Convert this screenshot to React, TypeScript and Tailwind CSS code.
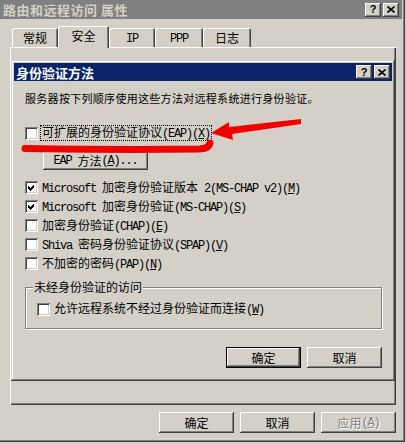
import React from 'react';

// classic Windows bevels
const WIN = "shadow-[inset_-1px_-1px_0_#404040,inset_1px_1px_0_#d4d0c8,inset_-2px_-2px_0_#808080,inset_2px_2px_0_#ffffff]";
const BTN = "shadow-[inset_-1px_-1px_0_#404040,inset_1px_1px_0_#ffffff,inset_-2px_-2px_0_#808080,inset_2px_2px_0_#d4d0c8]";
const BTN_DEF = "shadow-[inset_0_0_0_1px_#000000,inset_-2px_-2px_0_#404040,inset_2px_2px_0_#ffffff,inset_-3px_-3px_0_#808080]";
const BOX = "shadow-[inset_1px_1px_0_#808080,inset_-1px_-1px_0_#ffffff,inset_2px_2px_0_#404040,inset_-2px_-2px_0_#d4d0c8]";
const PANEL = "shadow-[inset_1px_1px_0_#ffffff,inset_-1px_-1px_0_#404040,inset_-2px_-2px_0_#808080]";
const TAB = "shadow-[inset_1px_1px_0_#ffffff,inset_-1px_0_0_#404040,inset_-2px_0_0_#808080]";

// '&' marks the access key; ascii runs get the narrow mono face
function Txt({ s }: { s: string }) {
  const runs: { t: string; a: boolean; u: boolean }[] = [];
  for (let i = 0; i < s.length; i++) {
    let c = s[i];
    let u = false;
    if (c === '&') { u = true; c = s[++i]; }
    const a = c.charCodeAt(0) < 128;
    const last = runs[runs.length - 1];
    if (last && !u && !last.u && last.a === a) last.t += c;
    else runs.push({ t: c, a, u });
  }
  return (
    <>
      {runs.map((r, i) => (
        <span
          key={i}
          className={`whitespace-pre ${r.a ? "font-['Liberation_Mono'] text-[12px] tracking-[-1.2px]" : ''} ${r.u ? 'underline underline-offset-[1px]' : ''}`}
        >
          {r.t}
        </span>
      ))}
    </>
  );
}

function TitleButtons() {
  return (
    <div className="ml-auto flex gap-[2px]">
      <div className={`w-[16px] h-[14px] bg-[#d4d0c8] flex items-center justify-center ${BTN}`}>
        <span className="font-['Liberation_Sans'] font-bold text-[11px] leading-none text-black">?</span>
      </div>
      <div className={`w-[16px] h-[14px] bg-[#d4d0c8] flex items-center justify-center ${BTN}`}>
        <svg width="8" height="7" viewBox="0 0 8 7">
          <path d="M0.5 0.5 L7.5 6.5 M7.5 0.5 L0.5 6.5" stroke="#000" strokeWidth="1.6" />
        </svg>
      </div>
    </div>
  );
}

function CheckBox({ checked }: { checked?: boolean }) {
  return (
    <div className={`w-[13px] h-[13px] shrink-0 bg-white ${BOX}`}>
      {checked && (
        <svg width="13" height="13" viewBox="0 0 13 13" shapeRendering="crispEdges">
          <polygon points="3,5 5,7 9,3 9,6 5,10 3,8" fill="#000" />
        </svg>
      )}
    </div>
  );
}

function CheckRow({ label, checked, focus, className = '' }: { label: string; checked?: boolean; focus?: boolean; className?: string }) {
  return (
    <div className={`flex items-center ${className}`}>
      <CheckBox checked={checked} />
      <span className={`ml-[2px] px-[1px] leading-[12px] border whitespace-nowrap ${focus ? 'border-dotted border-black' : 'border-transparent'}`}>
        <Txt s={label} />
      </span>
    </div>
  );
}

function Btn({ children, def, className = '' }: { children: React.ReactNode; def?: boolean; className?: string }) {
  return (
    <div className={`flex items-center justify-center bg-[#d4d0c8] leading-[12px] ${def ? BTN_DEF : BTN} ${className}`}>
      {children}
    </div>
  );
}

const tabs = [
  { label: '常规', w: 'w-[46px]' },
  { label: '安全', w: 'w-[51px]', on: true },
  { label: 'IP', w: 'w-[46px]' },
  { label: 'PPP', w: 'w-[48px]' },
  { label: '日志', w: 'w-[48px]' },
];

export default function App() {
  return (
    <div className="relative w-[406px] h-[444px] overflow-hidden bg-[#d4d0c8] font-['Noto_Sans_CJK_SC',sans-serif] text-[12px] text-black">
      {/* property sheet */}
      <div className={`-ml-[3px] -mt-[3px] w-[408px] h-[445px] p-[3px] flex flex-col bg-[#d4d0c8] ${WIN}`}>
        <div className="h-[19px] shrink-0 bg-[#808080] flex items-center pl-[3px] pr-[3px]">
          <span className="text-[13px] font-bold tracking-[0.5px] leading-none text-[#d4d0c8]">路由和远程访问 属性</span>
          <TitleButtons />
        </div>

        <div className="mt-[7px] ml-[12px] h-[21px] flex items-end">
          {tabs.map((t) => (
            <div
              key={t.label}
              className={`${t.w} flex items-center justify-center bg-[#d4d0c8] rounded-t-[2px] ${TAB} ${t.on ? 'relative z-10 h-[22px] -mb-px pb-[3px]' : 'h-[19px]'}`}
            >
              <span className="leading-[12px]"><Txt s={t.label} /></span>
            </div>
          ))}
        </div>

        <div className={`ml-[10px] w-[386px] h-[358px] shrink-0 ${PANEL}`} />

        <div className="mt-[7px] ml-[10px] w-[386px] flex justify-end gap-[6px]">
          <Btn className="w-[75px] h-[21px]">确定</Btn>
          <Btn className="w-[75px] h-[21px]">取消</Btn>
          <Btn className="w-[75px] h-[21px] text-[#808080] text-shadow-[1px_1px_0_#ffffff]"><Txt s="应用(&A)" /></Btn>
        </div>
      </div>

      {/* 身份验证方法 dialog */}
      <div className={`absolute left-[11px] top-[60px] w-[384px] h-[321px] p-[3px] flex flex-col bg-[#d4d0c8] ${WIN}`}>
        <div className="h-[18px] shrink-0 bg-[#0a246a] flex items-center pl-[2px] pr-[2px]">
          <span className="text-[13px] font-bold leading-none text-white">身份验证方法</span>
          <TitleButtons />
        </div>

        <div className="flex flex-col pl-[11px] pr-[10px]">
          <p className="mt-[9px] h-[16px] leading-[16px] text-[11px] tracking-[0.3px] whitespace-nowrap">
            服务器按下列顺序使用这些方法对远程系统进行身份验证。
          </p>

          <CheckRow className="mt-[19px] h-[16px]" label="可扩展的身份验证协议(EAP)(&X)" focus />

          <Btn className="mt-[11px] ml-[18px] w-[105px] h-[18px]"><Txt s="EAP 方法(&A)..." /></Btn>

          <div className="mt-[8px] flex flex-col">
            <CheckRow className="h-[19px]" label="Microsoft 加密身份验证版本 2(MS-CHAP v2)(&M)" checked />
            <CheckRow className="h-[19px]" label="Microsoft 加密身份验证(MS-CHAP)(&S)" checked />
            <CheckRow className="h-[19px]" label="加密身份验证(CHAP)(&E)" />
            <CheckRow className="h-[19px]" label="Shiva 密码身份验证协议(SPAP)(&V)" />
            <CheckRow className="h-[19px]" label="不加密的密码(PAP)(&N)" />
          </div>

          <div className="relative mt-[14px] h-[42px] border border-[#808080] shadow-[inset_1px_1px_0_#ffffff,1px_1px_0_#ffffff] pt-[13px] pl-[11px]">
            <span className="absolute left-[7px] -top-[9px] px-[1px] bg-[#d4d0c8] leading-[16px]">未经身份验证的访问</span>
            <CheckRow className="h-[16px]" label="允许远程系统不经过身份验证而连接(&W)" />
          </div>

          <div className="mt-[18px] flex justify-end gap-[6px]">
            <Btn def className="w-[75px] h-[21px]">确定</Btn>
            <Btn className="w-[75px] h-[21px]">取消</Btn>
          </div>
        </div>
      </div>

      {/* red marks drawn on the screenshot */}
      <svg className="absolute inset-0 pointer-events-none" width="406" height="444" viewBox="0 0 406 444">
        <path d="M25 148.5 Q 120 150 200 149 Q 209 148.5 210 143" stroke="#f20000" strokeWidth="7" fill="none" strokeLinecap="round" />
        <polygon points="211,133 229,122 229,127 301,119 301,124 232,134 233,140" fill="#f20000" />
      </svg>
    </div>
  );
}
